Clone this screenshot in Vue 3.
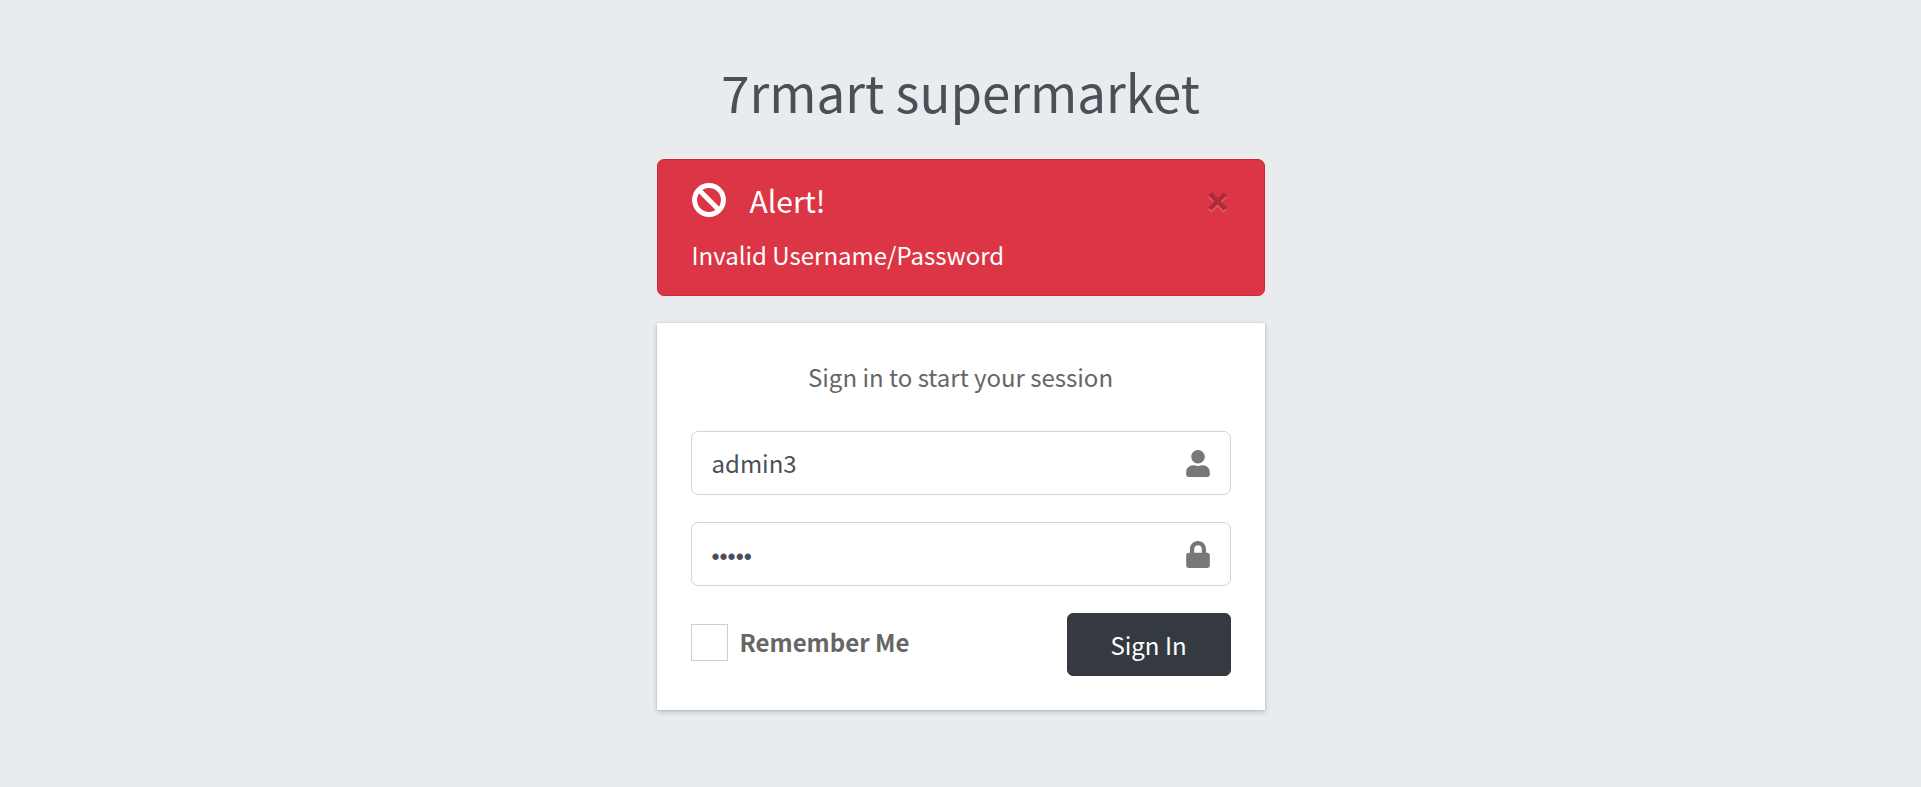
<script setup>
import { ref } from 'vue'

const username = ref('admin3')
const password = ref('admin')
const remember = ref(false)
const alertVisible = ref(true)
</script>

<template>
  <main class="login-page">
    <div class="login-box">
      <h1 class="login-logo"><a href="#">7rmart supermarket</a></h1>

      <div v-if="alertVisible" class="alert" role="alert">
        <div class="alert-head">
          <svg class="alert-icon" viewBox="0 0 34 34" aria-hidden="true">
            <circle cx="17" cy="17" r="14.4" />
            <path d="M7 7l20 20" />
          </svg>
          <h2 class="alert-title">Alert!</h2>
          <button class="close" type="button" aria-label="Close" @click="alertVisible = false">×</button>
        </div>
        <p class="alert-text">Invalid Username/Password</p>
      </div>

      <section class="card">
        <p class="card-message">Sign in to start your session</p>
        <form @submit.prevent>
          <div class="field">
            <input v-model="username" class="field-input" type="text" aria-label="Username" />
            <svg class="field-icon" viewBox="0 0 448 512" aria-hidden="true">
              <path d="M224 256c70.700 0 128-57.300 128-128S294.700 0 224 0 96 57.300 96 128s57.300 128 128 128zm89.600 32h-16.700c-22.200 10.200-46.900 16-72.900 16s-50.600-5.800-72.900-16h-16.700C60.200 288 0 348.200 0 422.400V464c0 26.500 21.500 48 48 48h352c26.500 0 48-21.500 48-48v-41.600c0-74.200-60.200-134.400-134.400-134.400z" />
            </svg>
          </div>
          <div class="field">
            <input v-model="password" class="field-input password" type="password" aria-label="Password" />
            <svg class="field-icon" viewBox="0 0 448 512" aria-hidden="true">
              <path d="M400 224h-24v-72C376 68.200 307.800 0 224 0S72 68.200 72 152v72H48c-26.500 0-48 21.500-48 48v192c0 26.500 21.500 48 48 48h352c26.500 0 48-21.500 48-48V272c0-26.500-21.500-48-48-48zm-104 0H152v-72c0-39.700 32.300-72 72-72s72 32.300 72 72v72z" />
            </svg>
          </div>
          <div class="actions">
            <label class="remember">
              <input v-model="remember" class="remember-box" type="checkbox" />
              Remember Me
            </label>
            <button class="submit" type="submit">Sign In</button>
          </div>
        </form>
      </section>
    </div>
  </main>
</template>

<style>
body {
  margin: 0;
  background: #e9ecef;
}
</style>

<style scoped>
.login-page {
  box-sizing: border-box;
  min-height: 100vh;
  display: flex;
  flex-direction: column;
  align-items: center;
  justify-content: center;
  background: #e9ecef;
  color: #212529;
  font-family: "Source Sans Pro", "Noto Sans CJK SC", sans-serif;
  font-size: 24px;
  line-height: 40px;
}

.login-box {
  width: 100%;
  max-width: 608px;
}

.login-logo {
  margin: 0 0 27px;
  font-size: 51px;
  font-weight: 400;
  line-height: 82px;
  text-align: center;
}

.login-logo a {
  color: #495057;
  text-decoration: none;
}

.alert {
  margin-bottom: 27px;
  padding: 20px 34px;
  border: 1px solid #d32535;
  border-radius: 7px;
  background: #dc3545;
  color: #fff;
}

.alert-head {
  display: flex;
  align-items: center;
  margin-bottom: 15px;
}

.alert-icon {
  width: 34px;
  height: 34px;
  margin-right: 24px;
  fill: none;
  stroke: #fff;
  stroke-width: 5;
}

.alert-title {
  margin: 0;
  font-size: 30px;
  font-weight: 400;
  line-height: 40px;
}

.close {
  margin-left: auto;
  padding: 0;
  border: 0;
  background: none;
  color: #000;
  font-family: "Open Sans", sans-serif;
  font-size: 42px;
  font-weight: 700;
  line-height: 40px;
  text-shadow: 0 2px 0 #fff;
  opacity: 0.2;
  cursor: pointer;
}

.alert-text {
  margin: 0;
}

.card {
  margin-bottom: 27px;
  padding: 34px;
  background: #fff;
  box-shadow: 0 0 2px rgba(0, 0, 0, 0.13), 0 2px 5px rgba(0, 0, 0, 0.2);
  color: #666;
}

.card-message {
  margin: 0 0 34px;
  text-align: center;
}

.field {
  box-sizing: border-box;
  display: flex;
  align-items: center;
  height: 64px;
  margin-bottom: 27px;
  padding: 0 20px;
  border: 1px solid #ced4da;
  border-radius: 7px;
}

.field-input {
  flex: 1;
  min-width: 0;
  padding: 0;
  border: 0;
  outline: 0;
  background: none;
  color: #495057;
  font-family: inherit;
  font-size: 24px;
  line-height: 40px;
}

.field-input.password {
  padding-top: 5px;
  font-family: "Liberation Sans", sans-serif;
  font-size: 23px;
}

.field-icon {
  width: 24px;
  height: 27px;
  fill: #777;
}

.actions {
  display: flex;
  align-items: center;
  justify-content: space-between;
}

.remember {
  display: flex;
  align-items: center;
  gap: 12px;
  padding-bottom: 5px;
  font-weight: 700;
}

.remember-box {
  appearance: none;
  box-sizing: border-box;
  width: 37px;
  height: 37px;
  margin: 0;
  border: 1px solid #d3cfc8;
  background: #fff;
}

.remember-box:checked {
  background: #343a40;
}

.submit {
  width: 164px;
  height: 63px;
  padding: 0;
  border: 1px solid #343a40;
  border-radius: 6px;
  background: #343a40;
  color: #fff;
  font-family: inherit;
  font-size: 24px;
  line-height: 40px;
  cursor: pointer;
}
</style>
